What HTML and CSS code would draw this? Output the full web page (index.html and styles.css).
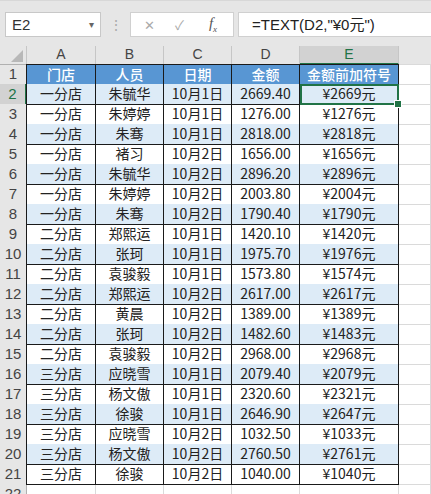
FILE: index.html
```html
<!DOCTYPE html>
<html lang="zh">
<head>
<meta charset="utf-8">
<link rel="stylesheet" href="styles.css">
</head>
<body>
<div class="toolbar">
  <div class="namebox"><span>E2</span><span class="caret">▾</span></div>
  <div class="dots">⋮</div>
  <div class="fxbox"><span class="x">✕</span><span class="chk">✓</span><span class="fx"><i>f</i><sub>x</sub></span></div>
  <div class="formula">=TEXT(D2,"¥0元")</div>
</div>
<div class="sheet" id="sheet">
  <div class="row colhdr">
    <div class="corner"><span class="tri"></span></div>
    <div class="ch">A</div><div class="ch">B</div><div class="ch">C</div><div class="ch">D</div><div class="ch sel">E</div><div class="ch blank"></div>
  </div>
</div>
<script src="app.js"></script>
</body>
</html>
```
FILE: app.js
```js
const data = [
["门店","人员","日期","金额","金额前加符号"],
["一分店","朱毓华","10月1日","2669.40","¥2669元"],
["一分店","朱婷婷","10月1日","1276.00","¥1276元"],
["一分店","朱骞","10月1日","2818.00","¥2818元"],
["一分店","褚习","10月2日","1656.00","¥1656元"],
["一分店","朱毓华","10月2日","2896.20","¥2896元"],
["一分店","朱婷婷","10月2日","2003.80","¥2004元"],
["一分店","朱骞","10月2日","1790.40","¥1790元"],
["二分店","郑熙运","10月1日","1420.10","¥1420元"],
["二分店","张珂","10月1日","1975.70","¥1976元"],
["二分店","袁骏毅","10月1日","1573.80","¥1574元"],
["二分店","郑熙运","10月2日","2617.00","¥2617元"],
["二分店","黄晨","10月2日","1389.00","¥1389元"],
["二分店","张珂","10月2日","1482.60","¥1483元"],
["二分店","袁骏毅","10月2日","2968.00","¥2968元"],
["三分店","应晓雪","10月1日","2079.40","¥2079元"],
["三分店","杨文傲","10月1日","2320.60","¥2321元"],
["三分店","徐骏","10月1日","2646.90","¥2647元"],
["三分店","应晓雪","10月2日","1032.50","¥1033元"],
["三分店","杨文傲","10月2日","2760.50","¥2761元"],
["三分店","徐骏","10月2日","1040.00","¥1040元"]
];
const sheet = document.getElementById('sheet');
data.forEach((r, i) => {
  const row = document.createElement('div');
  let cls = 'row';
  if (i === 0) cls += ' head';
  else if (i % 2 === 1) cls += ' band';
  row.className = cls;
  const rh = document.createElement('div');
  rh.className = 'rh' + (i === 1 ? ' sel' : '');
  rh.textContent = i + 1;
  row.appendChild(rh);
  r.forEach((v, j) => {
    const c = document.createElement('div');
    c.className = 'c' + (j === 0 ? ' first' : '') + (i === 1 && j === 4 ? ' active' : '');
    c.textContent = v;
    if (i === 1 && j === 4) {
      const h = document.createElement('span');
      h.className = 'handle';
      c.appendChild(h);
    }
    row.appendChild(c);
  });
  const b = document.createElement('div');
  b.className = 'blank';
  row.appendChild(b);
  sheet.appendChild(row);
});
const last = document.createElement('div');
last.className = 'row empty';
last.innerHTML = '<div class="rh">22</div><div class="g"></div><div class="g"></div><div class="g"></div><div class="g"></div><div class="g"></div><div class="g"></div>';
sheet.appendChild(last);
```
FILE: styles.css
```css
html, body { margin: 0; padding: 0; background: #fff; overflow: hidden; }
body { font-family: "Noto Sans CJK SC", "Noto Sans", sans-serif; color: #222; width: 431px; height: 494px; }

.toolbar {
  height: 46px;
  background: #e6e6e6;
  display: flex;
  align-items: flex-start;
  padding-top: 11px;
  box-sizing: border-box;
  border-top: 1px solid #d8d8d8;
}
.namebox {
  margin-left: 5px;
  width: 96px;
  height: 25px;
  box-sizing: border-box;
  background: #fff;
  border: 1px solid #c8c8c8;
  display: flex;
  align-items: center;
  justify-content: space-between;
  padding: 0 6px 0 6px;
  font-family: "Liberation Sans", sans-serif;
  font-size: 15px;
  color: #333;
}
.caret { font-size: 10px; color: #666; }
.dots { width: 29px; text-align: center; color: #aaa; font-size: 14px; line-height: 25px; }
.fxbox {
  width: 104px;
  height: 25px;
  box-sizing: border-box;
  background: #fff;
  border: 1px solid #d0d0d0;
  display: flex;
  align-items: center;
  font-size: 13px;
  color: #aaa;
}
.fxbox .x { margin-left: 13px; }
.fxbox .chk { margin-left: 20px; }
.fxbox .fx { margin-left: 25px; font-family: "Liberation Serif", serif; color: #555; font-size: 15px; }
.fxbox .fx sub { font-size: 9px; font-style: italic; }
.formula {
  margin-left: 4px;
  flex: 1;
  height: 25px;
  box-sizing: border-box;
  background: #fff;
  border: 1px solid #d0d0d0;
  border-right: none;
  padding-left: 13px;
  font-family: "Liberation Sans", "Noto Sans CJK SC", sans-serif;
  font-size: 15px;
  line-height: 23px;
  color: #222;
}

.sheet { display: flex; flex-direction: column; }
.row {
  display: grid;
  grid-template-columns: 27px 69px 68px 68px 68px 99px 1fr;
  height: 20px;
}
.row.colhdr { height: 18px; }
.corner, .ch {
  background: #e6e6e6;
  border-right: 1px solid #c6c6c6;
  border-bottom: 1px solid #b0b0b0;
  box-sizing: border-box;
  font-size: 14px;
  line-height: 17px;
  text-align: center;
  color: #444;
  font-family: "Liberation Sans", sans-serif;
}
.corner { position: relative; }
.tri {
  position: absolute; right: 3px; bottom: 2px;
  width: 0; height: 0;
  border-left: 12px solid transparent;
  border-bottom: 12px solid #b8b8b8;
}
.ch.sel { background: #d2d2d2; border-bottom: 2px solid #217346; color: #217346; }
.ch.blank { border-right: none; }

.rh {
  background: #e6e6e6;
  border-right: 1px solid #b0b0b0;
  border-bottom: 1px solid #c6c6c6;
  box-sizing: border-box;
  font-family: "Liberation Sans", sans-serif;
  font-size: 15px;
  line-height: 20px;
  text-align: center;
  color: #444;
}
.rh.sel { background: #d2d2d2; border-right: 2px solid #217346; color: #217346; }

.c {
  box-sizing: border-box;
  border-right: 1px solid #1a1a1a;
  border-bottom: 1px solid #1a1a1a;
  font-size: 14px;
  line-height: 19px;
  text-align: center;
  color: #222;
  white-space: nowrap;
  position: relative;
}
.c.first { border-left: 1px solid #1a1a1a; margin-left: -1px; }
.row.head .c { background: #5896d3; color: #fff; border-top: 1px solid #1a1a1a; line-height: 18px; font-weight: 500; }
.row.band .c { background: #ddebf7; }
.blank, .g {
  box-sizing: border-box;
  border-bottom: 1px solid #dadada;
  border-right: 1px solid #dadada;
}
.c.active { outline: 2px solid #217346; outline-offset: -2px; }
.handle {
  position: absolute; right: -4px; bottom: -4px;
  width: 6px; height: 6px;
  background: #217346;
  border: 1px solid #fff;
  z-index: 2;
}
.row.empty .g { border-right: 1px solid #dadada; }
```
